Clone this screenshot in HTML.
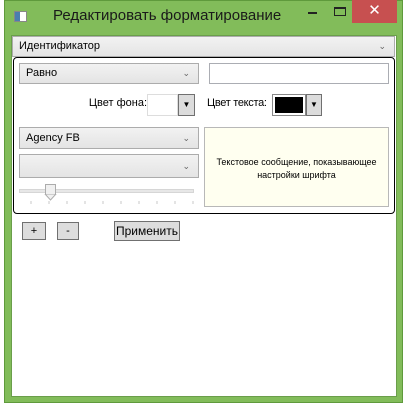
<!DOCTYPE html>
<html><head><meta charset="utf-8"><style>
*{box-sizing:border-box;margin:0;padding:0}
body{width:407px;height:404px;background:#fff;position:relative;overflow:hidden;font-family:"Liberation Sans","DejaVu Sans",sans-serif;font-size:11px;color:#000}
.a{position:absolute}
.win{left:4px;top:0;width:399px;height:403px;background:#82bc5a;border:1px solid #5f9a3c}
.client{left:11px;top:35px;width:386px;height:362px;background:#fff;border:1px solid #6a9e4a}
.combo{background:linear-gradient(#f2f2f2,#e4e4e4);border:1px solid #acacac;padding-left:6px;line-height:19px}
.combo .ch{position:absolute;right:8px;top:0;font-size:9px;color:#666}
.tb{background:#fff;border:1px solid #abadb3}
.btn{background:#dddddd;border:1px solid #707070;text-align:center;line-height:17px}
</style></head><body>
<div class="a win"></div>
<div class="a" style="left:14px;top:11px;width:13px;height:11px;background:#fff;border:1px solid #888"><div style="width:5px;height:9px;background:#4a7fb0"></div></div>
<div class="a" style="left:53px;top:7px;font-size:15px;color:#1a1a1a">Редактировать форматирование</div>
<div class="a" style="left:308px;top:12px;width:9px;height:2px;background:#222"></div>
<div class="a" style="left:334px;top:7px;width:12px;height:9px;border:1px solid #222;border-top-width:2px"></div>
<div class="a" style="left:352px;top:0;width:45px;height:23px;background:#c75050;color:#fff;text-align:center;font-size:15px;line-height:21px;font-weight:bold">✕</div>
<div class="a client"></div>
<div class="a combo" style="left:12px;top:36px;width:383px;height:21px">Идентификатор<span class="ch">⌄</span></div>
<div class="a" style="left:13px;top:57px;width:382px;height:157px;border:1px solid #000;border-radius:4px"></div>
<div class="a combo" style="left:19px;top:63px;width:180px;height:21px">Равно<span class="ch">⌄</span></div>
<div class="a tb" style="left:209px;top:63px;width:180px;height:21px"></div>
<div class="a" style="left:60px;width:87px;text-align:right;top:97px;white-space:nowrap">Цвет фона:</div>
<div class="a tb" style="left:147px;top:94px;width:31px;height:22px;border-color:#ddd"></div>
<div class="a btn" style="left:178px;top:94px;width:17px;height:22px;background:#dcdcdc;font-size:8px;line-height:20px">▼</div>
<div class="a" style="left:207px;top:97px;white-space:nowrap;letter-spacing:-0.3px">Цвет текста:</div>
<div class="a" style="left:272px;top:94px;width:34px;height:22px;border:1px solid #888;background:#fff;padding:2px"><div style="width:100%;height:100%;background:#000"></div></div>
<div class="a btn" style="left:306px;top:94px;width:16px;height:22px;background:#dcdcdc;font-size:8px;line-height:20px">▼</div>
<div class="a combo" style="left:19px;top:127px;width:180px;height:22px;line-height:20px">Agency FB<span class="ch">⌄</span></div>
<div class="a combo" style="left:19px;top:154px;width:180px;height:24px"><span class="ch" style="top:2px">⌄</span></div>
<div class="a" style="left:19px;top:189px;width:175px;height:4px;background:#e7e7e7;border:1px solid #d6d6d6"></div>
<div class="a" style="left:45px;top:184px;width:11px;height:11px;background:#f0f0f0;border:1px solid #acacac;border-bottom:none"></div>
<svg class="a" style="left:44px;top:194px" width="13" height="8"><polygon points="1,0 12,0 6.5,6" fill="#f0f0f0" stroke="#acacac"/></svg>
<svg class="a" style="left:19px;top:201px" width="180" height="6"><g stroke="#c8c8c8"><line x1="12" y1="0" x2="12" y2="3"/><line x1="30" y1="0" x2="30" y2="3"/><line x1="48" y1="0" x2="48" y2="3"/><line x1="66" y1="0" x2="66" y2="3"/><line x1="84" y1="0" x2="84" y2="3"/><line x1="102" y1="0" x2="102" y2="3"/><line x1="120" y1="0" x2="120" y2="3"/><line x1="138" y1="0" x2="138" y2="3"/><line x1="156" y1="0" x2="156" y2="3"/><line x1="174" y1="0" x2="174" y2="3"/></g></svg>
<div class="a" style="left:204px;top:127px;width:185px;height:80px;background:#fffff0;border:1px solid #b8b8b8;font-size:9px;text-align:center;padding-top:28px;line-height:13px">Текстовое сообщение, показывающее<br>настройки шрифта</div>
<div class="a btn" style="left:22px;top:222px;width:24px;height:18px">+</div>
<div class="a btn" style="left:57px;top:222px;width:22px;height:18px">-</div>
<div class="a btn" style="left:114px;top:221px;width:66px;height:20px;line-height:18px;font-size:12px">Применить</div>
</body></html>
